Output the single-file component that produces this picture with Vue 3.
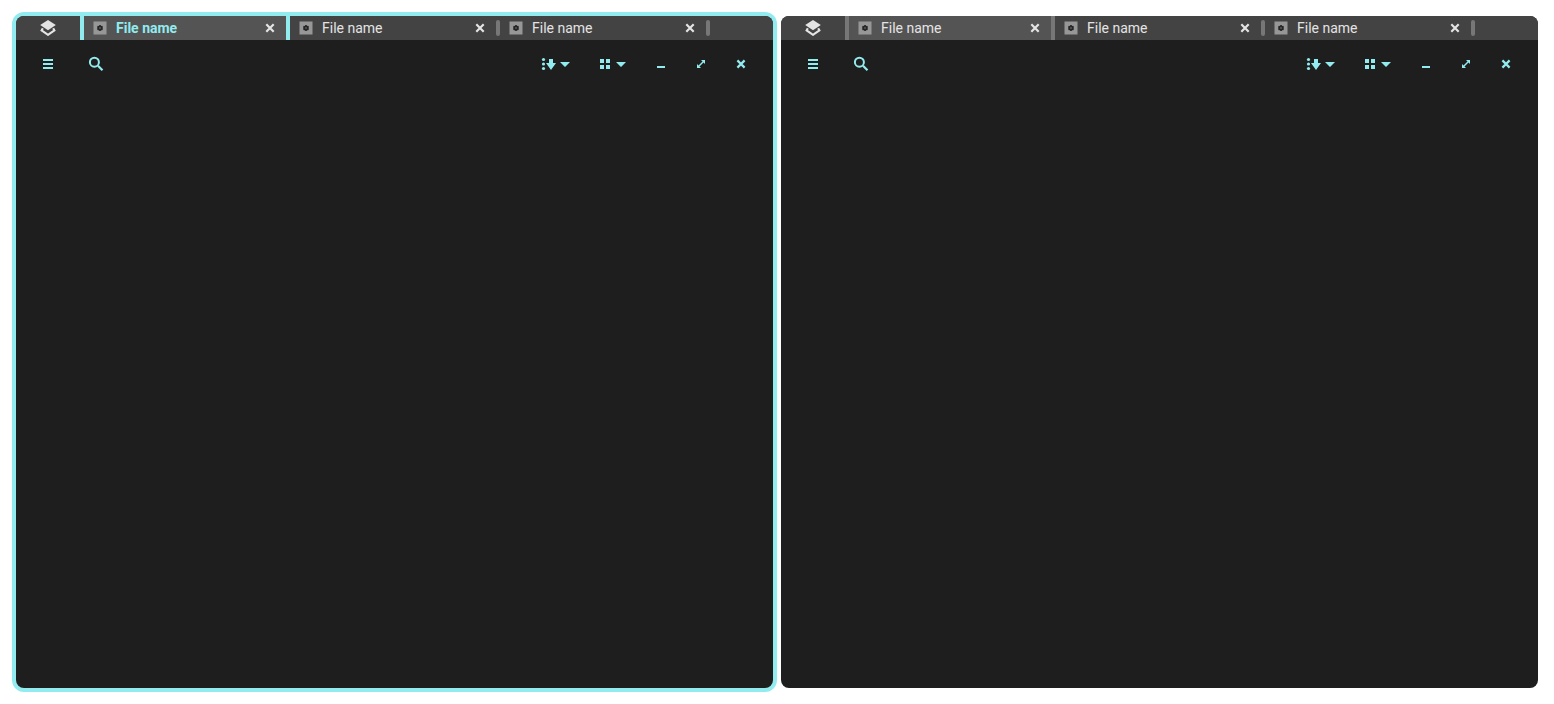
<script setup>
import { ref } from 'vue'

const windows = ref([
  { id: 'left', focused: true, activeTab: 0, tabs: ['File name', 'File name', 'File name'] },
  { id: 'right', focused: false, activeTab: 0, tabs: ['File name', 'File name', 'File name'] },
])
</script>

<template>
  <main class="desktop">
    <section
      v-for="win in windows"
      :key="win.id"
      class="window"
      :class="{ focused: win.focused }"
    >
      <header class="tabbar">
        <button class="stack" type="button" aria-label="Stack">
          <svg width="16" height="16" viewBox="0 0 16 16" aria-hidden="true">
            <path d="M8 0 15.8 5 13.6 6.6 8 10.2 2.4 6.6.2 5Z" fill="currentColor" />
            <path d="M2.8 8.2 1.6 10.4 8 14.8 14.4 10.4 13.2 8.2" fill="none" stroke="currentColor" stroke-width="2.1" />
          </svg>
        </button>
        <template v-for="(tab, i) in win.tabs" :key="i">
          <span v-if="i === 0" class="sep full"></span>
          <div class="tab" :class="{ active: i === win.activeTab }">
            <button class="label" type="button">
              <svg width="14" height="14" viewBox="0 0 14 14" aria-hidden="true">
                <rect x=".5" y=".5" width="13" height="13" fill="#979797" />
                <path d="M7 4v6M4.4 5.5l5.2 3M9.6 5.5 4.4 8.5" stroke="#252525" stroke-width="1.5" />
                <circle cx="7" cy="7" r="1.8" fill="none" stroke="#252525" stroke-width="1.5" />
                <circle cx="7" cy="7" r=".8" fill="#808080" />
              </svg>
              <span>{{ tab }}</span>
            </button>
            <button class="close" type="button" aria-label="Close tab">
              <svg width="10" height="10" viewBox="0 0 10 10" aria-hidden="true">
                <path d="M1.3 1.3 8.7 8.7M8.7 1.3 1.3 8.7" stroke="currentColor" stroke-width="2.2" />
              </svg>
            </button>
          </div>
          <span class="sep" :class="{ full: i === win.activeTab }"></span>
        </template>
      </header>

      <nav class="toolbar">
        <button class="tool wide" type="button" aria-label="Menu">
          <svg width="16" height="16" viewBox="0 0 16 16" aria-hidden="true">
            <path d="M3 3h10v2H3zM3 7h10v2H3zM3 11h10v2H3z" fill="currentColor" />
          </svg>
        </button>
        <button class="tool wide" type="button" aria-label="Search">
          <svg width="16" height="16" viewBox="0 0 16 16" aria-hidden="true">
            <circle cx="6.4" cy="6.2" r="4.5" fill="none" stroke="currentColor" stroke-width="2" />
            <path d="M10 9.8 14.5 14.3" stroke="currentColor" stroke-width="2.2" />
          </svg>
        </button>
        <span class="spacer"></span>
        <button class="tool menu" type="button" aria-label="Sort">
          <svg width="32" height="16" viewBox="0 0 32 16" aria-hidden="true">
            <g fill="currentColor">
              <circle cx="2.5" cy="3.5" r="1.6" />
              <circle cx="2.5" cy="8" r="1.6" />
              <circle cx="2.5" cy="12.5" r="1.6" />
              <path d="M8 3h4v4h3L10 14 5 7h3zM19 6h10l-5 5z" />
            </g>
          </svg>
        </button>
        <button class="tool menu" type="button" aria-label="View">
          <svg width="32" height="16" viewBox="0 0 32 16" aria-hidden="true">
            <path d="M3 3h4v4H3zM9 3h4v4H9zM3 9h4v4H3zM9 9h4v4H9zM19 6h10l-5 5z" fill="currentColor" />
          </svg>
        </button>
        <button class="tool" type="button" aria-label="Minimize">
          <svg width="16" height="16" viewBox="0 0 16 16" aria-hidden="true">
            <path d="M4 10h8v2H4z" fill="currentColor" />
          </svg>
        </button>
        <button class="tool" type="button" aria-label="Maximize">
          <svg width="16" height="16" viewBox="0 0 16 16" aria-hidden="true">
            <path d="M8 4h4v4zM4 8v4h4z" fill="currentColor" />
            <path d="M5.5 10.5 10.5 5.5" stroke="currentColor" stroke-width="1.4" />
          </svg>
        </button>
        <button class="tool" type="button" aria-label="Close">
          <svg width="16" height="16" viewBox="0 0 16 16" aria-hidden="true">
            <path d="M4.4 4.4 11.6 11.6M11.6 4.4 4.4 11.6" stroke="currentColor" stroke-width="2.2" />
          </svg>
        </button>
      </nav>
    </section>
  </main>
</template>

<style>
body {
  margin: 0;
  background: #fff;
}
</style>

<style scoped>
.desktop {
  --accent: #92ebef;
  box-sizing: border-box;
  min-height: 100vh;
  padding: 16px;
  display: flex;
  gap: 8px;
  font-family: Roboto, "Noto Sans", sans-serif;
  font-size: 14px;
  line-height: 24px;
}
.window {
  flex: 1;
  min-width: 0;
  border-radius: 8px;
  overflow: hidden;
  background: #1e1e1e;
}
.focused {
  box-shadow: 0 0 0 4px var(--accent);
}
button {
  margin: 0;
  padding: 0;
  border: 0;
  background: none;
  color: inherit;
  font: inherit;
  display: flex;
  align-items: center;
  justify-content: center;
}
svg {
  display: block;
  flex: none;
}
.tabbar {
  display: flex;
  align-items: center;
  height: 24px;
  background: #434343;
  color: #e4e4e4;
}
.stack {
  width: 64px;
  height: 24px;
}
.sep {
  width: 4px;
  height: 16px;
  border-radius: 2px;
  background: #777;
}
.sep.full {
  height: 24px;
  border-radius: 0;
}
.focused .sep.full {
  background: var(--accent);
}
.tab {
  display: flex;
  width: 206px;
  height: 24px;
}
.tab.active {
  width: 202px;
  background: #545454;
}
.label {
  flex: 1;
  justify-content: flex-start;
  gap: 9px;
  padding-left: 9px;
}
.focused .active .label {
  color: var(--accent);
  font-weight: 700;
}
.close {
  width: 32px;
}
.toolbar {
  display: flex;
  align-items: center;
  height: 48px;
  padding: 0 12px 0 8px;
  color: var(--accent);
}
.tool {
  width: 40px;
  height: 40px;
}
.tool.wide {
  width: 48px;
}
.tool.menu {
  width: 56px;
}
.spacer {
  flex: 1;
}
</style>
